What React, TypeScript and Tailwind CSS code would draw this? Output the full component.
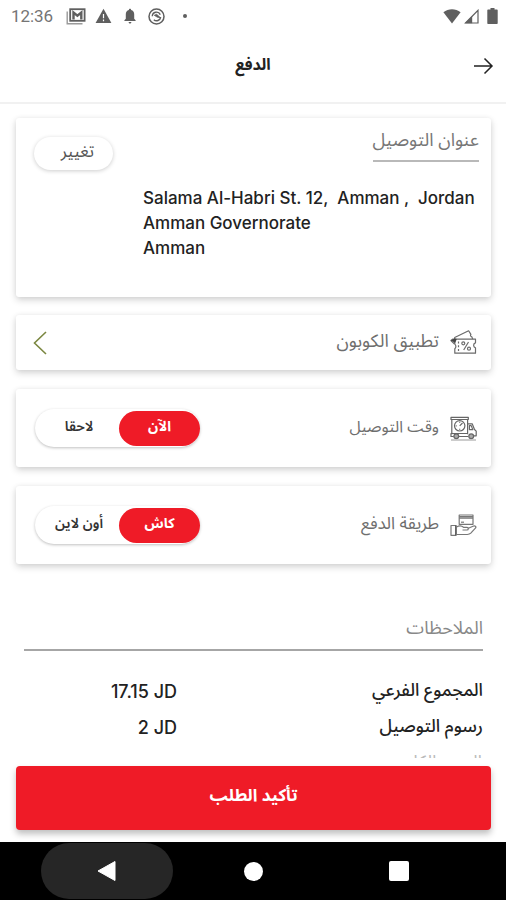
import clsx from 'clsx';
import { useState, type ReactNode } from 'react';

type Option = { id: string; label: string };

const timeOptions: Option[] = [
   { id: 'now', label: 'الآن' },
   { id: 'later', label: 'لاحقا' },
];

const paymentOptions: Option[] = [
   { id: 'cash', label: 'كاش' },
   { id: 'online', label: 'أون لاين' },
];

const addressLines = ['Salama Al-Habri St. 12,  Amman ,  Jordan', 'Amman Governorate', 'Amman'];

function StatusBar() {
   return (
      <div dir="ltr" className="flex h-8 shrink-0 items-center justify-between pl-[11px] pr-2 text-[#5f5f5f]">
         <div className="flex items-center">
            <span className="w-[43px] font-['Roboto',sans-serif] text-[17px] leading-none tracking-[-0.1px] text-[#757575]">
               12:36
            </span>
            <svg className="ml-3 h-[17px] w-5" viewBox="0 0 20 17" fill="none">
               <path d="M1.2 3.5v12.3h15.3" stroke="#9a9a9a" strokeWidth="1.4" />
               <rect x="4.2" y="1.2" width="14.4" height="11.6" stroke="currentColor" strokeWidth="1.8" />
               <path d="M7.5 11.5V4.5l3.9 3.2 3.9-3.2v7" stroke="currentColor" strokeWidth="2.4" />
            </svg>
            <svg className="ml-[9px] h-4 w-[17px]" viewBox="0 0 17 16">
               <path d="M8.5.8 16.4 15H.6z" fill="currentColor" />
               <path d="M8.5 6v4.3M8.5 11.6v1.7" stroke="#fff" strokeWidth="1.2" />
            </svg>
            <svg className="ml-3 h-4 w-3" viewBox="0 0 12 16" fill="currentColor">
               <path d="M6 .8c.7 0 1.1.5 1.1 1.2 2 .5 3.1 2.1 3.1 4.2v4.6l1.4 1.4v.9H.4v-.9l1.4-1.4V6.2c0-2.1 1.1-3.7 3.1-4.2C4.9 1.3 5.3.8 6 .8zM4.6 14h2.8c0 .9-.6 1.5-1.4 1.5S4.6 14.9 4.6 14z" />
            </svg>
            <svg className="ml-3 h-[17px] w-[17px]" viewBox="0 0 17 17" fill="none" stroke="currentColor">
               <circle cx="8.5" cy="8.5" r="7.5" strokeWidth="1.5" />
               <path d="M4.3 8.3a4.2 4.2 0 0 1 8-1.7M12.7 9.2a4.2 4.2 0 0 1-6.9 2.5" strokeWidth="1.4" />
               <path d="m6.3 7.3 2.3-1 3.7 3.3-2.8-.3z" fill="currentColor" strokeWidth="0.8" />
            </svg>
            <span className="ml-[18px] size-1 rounded-full bg-[#5f5f5f]" />
         </div>
         <div className="flex items-center">
            <svg className="h-[15px] w-[18px]" viewBox="0 0 18 15">
               <path d="M.4 3.2C5.4-.7 12.6-.7 17.6 3.2L9 14.5z" fill="currentColor" />
            </svg>
            <svg className="ml-[3px] h-[15px] w-[15px]" viewBox="0 0 15 15">
               <path d="M1.5 14 14 1.3V14z" fill="none" stroke="currentColor" strokeWidth="1.2" />
               <path d="M1 14.3 8.2 7v7.3z" fill="currentColor" />
            </svg>
            <svg className="ml-[8px] h-4 w-[11px]" viewBox="0 0 11 16">
               <path d="M3.5 0h4v1.6H10c.4 0 .7.3.7.7v13c0 .4-.3.7-.7.7H1c-.4 0-.7-.3-.7-.7v-13c0-.4.3-.7.7-.7h2.5z" fill="currentColor" />
            </svg>
         </div>
      </div>
   );
}

function CouponIcon() {
   return (
      <svg className="h-[25px] w-[27px]" viewBox="0 0 27 25" fill="none" stroke="#6b6b6b" strokeWidth="1.2" strokeLinejoin="round">
         <path d="M4.8 9.2h20.7v3.6a2.6 2.6 0 0 0 0 5v5.4H4.8v-4.5a3 3 0 0 0 0-4.6z" />
         <path d="M4.5 14 .9 10.6l2-1.5c1.2.3 2-.4 1.8-1.6L18.600.8l2.3 3.6c-.8 1-.4 2.2.9 2.4l.9 2.3" />
         <path d="m1.3 10.7 3.2-1.5 1.5.2-1.4 3" fill="#444" stroke="#444" />
         <path d="m18.5 12-4.8 8" />
         <circle cx="13.3" cy="13.3" r="1.5" />
         <circle cx="19" cy="18.7" r="1.5" />
         <path d="M8.5 11.5v2M8.5 15.3v2M8.5 19v2" />
      </svg>
   );
}

function TruckIcon() {
   return (
      <svg className="h-[25px] w-[27px]" viewBox="0 0 27 25" fill="none" stroke="#666" strokeWidth="1.2" strokeLinejoin="round">
         <path d="M1 1.3h17.3v2.2H1zM1.8 3.5v14.7M17.6 3.5v14.7" />
         <circle cx="9.7" cy="9.8" r="5.2" />
         <path d="M9.7 9.8 12.5 7M9.7 5.8v1M5.7 9.8h1M9.7 12.8v1" />
         <path d="M17.6 7.8h4.6l2.3 5.7 1.7 1.7v4.6h-2.3M19.4 9.6h1.8l1.6 4h-3.4z" />
         <path d="M3.8 20.5H1v-3h16.6M8.8 20.5h9.4" />
         <circle cx="6.3" cy="20.3" r="2.4" fill="#aaa" />
         <circle cx="21.2" cy="20.3" r="2.4" fill="#aaa" />
         <path d="M1 24h25" stroke="#aaa" />
      </svg>
   );
}

function PaymentIcon() {
   return (
      <svg className="h-[23px] w-[27px]" viewBox="0 0 27 23" fill="none" stroke="#777" strokeWidth="1.2" strokeLinejoin="round">
         <rect x="9.2" y="1" width="13.8" height="9.3" />
         <path d="M9.2 2.6H23M9.2 4.2H23" />
         <path d="M11 8.2h3" />
         <path d="M1 11.5h5v9.8H1z" />
         <path d="M5.9 11.5v9.8" stroke="#444" />
         <path d="M6.5 13c3-1.6 5-1.5 7 .3h3.5c1.7 0 1.7 2.7 0 2.7h-4.5M17.8 14.5l5.2-2.3c2-.8 3.6.5 2.4 2l-4.6 5c-1 1-2 1.3-3.5 1.3H6.5" />
      </svg>
   );
}

function Card({ className, children }: { className?: string; children: ReactNode }) {
   return (
      <section
         className={clsx(
            'mr-[15px] ml-4 shrink-0 rounded-[3px] bg-white shadow-[0_3px_7px_rgba(0,0,0,0.17),0_0_5px_rgba(0,0,0,0.05)]',
            className,
         )}
      >
         {children}
      </section>
   );
}

function CardLabel({ icon, className, children }: { icon: ReactNode; className: string; children: ReactNode }) {
   return (
      <div className="flex items-center gap-[11px]">
         {icon}
         <span className={clsx('pb-[3px] leading-6 text-[#6e6e6e]', className)}>{children}</span>
      </div>
   );
}

function Toggle({ options }: { options: Option[] }) {
   const [selected, setSelected] = useState(options[0].id);

   return (
      <div className="flex h-[38px] w-[165px] items-center rounded-full bg-white shadow-[0_1px_3px_rgba(0,0,0,0.25)]">
         {options.map((option) => (
            <button
               key={option.id}
               type="button"
               onClick={() => setSelected(option.id)}
               className={clsx(
                  'flex h-[35px] items-center justify-center rounded-full pb-[3px] text-[14px] leading-none',
                  selected === option.id
                     ? 'w-[81px] bg-[#ef1b27] font-bold text-white'
                     : 'w-[84px] pl-1 font-semibold text-[#333]',
               )}
            >
               {option.label}
            </button>
         ))}
      </div>
   );
}

function SummaryRow({ label, value }: { label: string; value: string }) {
   return (
      <div className="flex h-9 shrink-0 items-center justify-between pr-[23px]">
         <span className="pt-[2px] text-[17.6px] leading-[34px] font-medium text-[#222]">{label}</span>
         <span dir="ltr" className="w-[177px] pt-1 text-right font-['Inter',sans-serif] text-[18px] leading-none font-medium text-[#222]">
            {value}
         </span>
      </div>
   );
}

function NavigationBar() {
   return (
      <nav dir="ltr" className="flex h-[58px] shrink-0 items-center bg-black pl-[41px]">
         <button type="button" aria-label="Back" className="flex h-14 w-[132px] items-center justify-center rounded-full bg-[#262626]">
            <svg className="h-[22px] w-5" viewBox="0 0 20 22">
               <path d="M18 1.5v19L1 11z" fill="#fff" stroke="#fff" strokeLinejoin="round" />
            </svg>
         </button>
         <button type="button" aria-label="Home" className="ml-[71px] size-[19px] rounded-full bg-white" />
         <button type="button" aria-label="Recents" className="ml-[126px] size-5 rounded-[2px] bg-white" />
      </nav>
   );
}

export default function App() {
   return (
      <div
         dir="rtl"
         className="flex h-[900px] w-[506px] flex-col overflow-hidden bg-white font-['Noto_Sans_Arabic','Noto_Naskh_Arabic','DejaVu_Sans',sans-serif]"
      >
         <StatusBar />
         <header className="grid h-[72px] shrink-0 grid-cols-[1fr_auto_1fr] items-center border-b-2 border-[#f1f1f1] px-3 pb-[2px]">
            <button type="button" aria-label="Back" className="justify-self-start">
               <svg className="h-5 w-[22px]" viewBox="0 0 22 20" fill="none" stroke="#222" strokeWidth="1.5">
                  <path d="M2 10h18M12.5 2.5 20 10l-7.5 7.5" />
               </svg>
            </button>
            <h1 className="pb-[3px] text-[16px] font-bold text-[#222]">الدفع</h1>
            <span />
         </header>

         <main className="flex min-h-0 grow flex-col overflow-hidden pt-[14px]">
            <Card className="h-[179px] pr-[12px] pl-[18px]">
               <div className="flex items-start justify-between pt-[9px]">
                  <h2 className="h-[35px] border-b-2 border-[#b9b9b9] text-[18.2px] leading-[27px] text-[#777]">عنوان التوصيل</h2>
                  <button
                     type="button"
                     className="mt-[10px] h-[33px] w-[79px] rounded-full pb-[2px] pl-2 text-[17px] leading-none text-[#555] shadow-[0_1px_4px_rgba(0,0,0,0.2)]"
                  >
                     تغيير
                  </button>
               </div>
               <div dir="ltr" className="mt-4 pl-[109px] font-['Inter',sans-serif] text-[17px] leading-[25px] font-medium text-[#222]">
                  {addressLines.map((line) => (
                     <p key={line} className="whitespace-pre">
                        {line}
                     </p>
                  ))}
               </div>
            </Card>

            <Card className="mt-[18px] flex h-[55px] items-center justify-between pr-[14px] pl-[17px]">
               <CardLabel icon={<CouponIcon />} className="text-[18px]">
                  تطبيق الكوبون
               </CardLabel>
               <svg className="h-6 w-[14px]" viewBox="0 0 14 24" fill="none" stroke="#7b8741" strokeWidth="1.6">
                  <path d="M13 1 1.5 12 13 23" />
               </svg>
            </Card>

            <Card className="mt-[19px] flex h-[78px] items-center justify-between pr-[14px] pl-[19px]">
               <CardLabel icon={<TruckIcon />} className="text-[16px]">
                  وقت التوصيل
               </CardLabel>
               <Toggle options={timeOptions} />
            </Card>

            <Card className="mt-[19px] flex h-[78px] items-center justify-between pr-[14px] pl-[19px]">
               <CardLabel icon={<PaymentIcon />} className="text-[17px]">
                  طريقة الدفع
               </CardLabel>
               <Toggle options={paymentOptions} />
            </Card>

            <div className="mr-[23px] ml-6 mt-[50px] h-[37px] shrink-0 border-b-2 border-[#a6a6a6] text-[18px] leading-7 text-[#888]">
               الملاحظات
            </div>
            <div className="mt-[21px] flex h-[86px] shrink-0 flex-col overflow-hidden">
               <SummaryRow label="المجموع الفرعي" value="17.15 JD" />
               <SummaryRow label="رسوم التوصيل" value="2 JD" />
               <div className="h-9 shrink-0 pr-6 text-[18px] leading-9 text-[#bbb]">السعر الكلي</div>
            </div>
         </main>

         <div className="shrink-0 pr-[15px] pb-3 pl-4">
            <button
               type="button"
               className="h-16 w-full rounded-[4px] bg-[#ef1b27] pb-[2px] text-[17px] font-bold text-white shadow-[0_4px_6px_rgba(0,0,0,0.25)]"
            >
               تأكيد الطلب
            </button>
         </div>
         <NavigationBar />
      </div>
   );
}
